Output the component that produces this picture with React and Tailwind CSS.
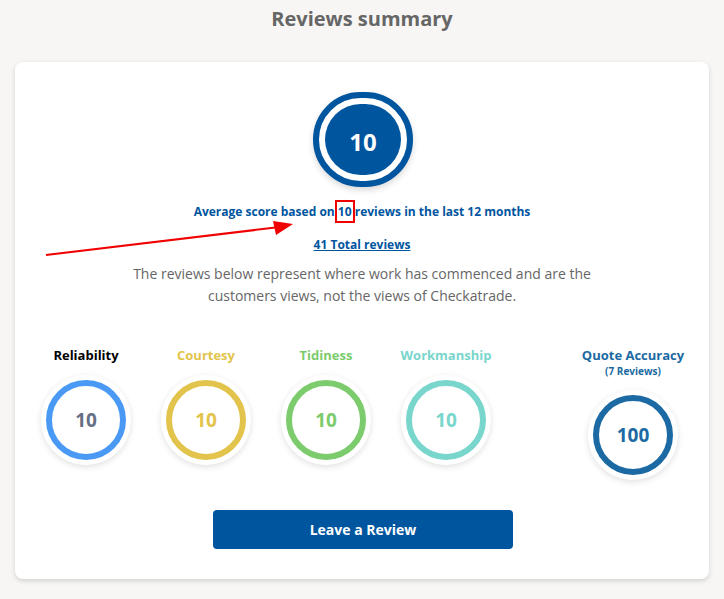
import React from 'react';

/**
 * Reviews summary card
 * - big average score badge
 * - category score rings
 * - leave a review button
 */
const categories = [
  { name: 'Reliability', score: 10, label: 'text-black', ring: 'border-[#4a9af5]', num: 'text-[#667085]' },
  { name: 'Courtesy', score: 10, label: 'text-[#e2c34b]', ring: 'border-[#e2c34b]', num: 'text-[#e2c34b]' },
  { name: 'Tidiness', score: 10, label: 'text-[#7ccb6c]', ring: 'border-[#7ccb6c]', num: 'text-[#7ccb6c]' },
  { name: 'Workmanship', score: 10, label: 'text-[#78d6cc]', ring: 'border-[#78d6cc]', num: 'text-[#78d6cc]' },
];

const ScoreRing = ({ ring, num, score }) => (
  <div className="w-[90px] h-[90px] rounded-full bg-white shadow-[0_2px_6px_rgba(0,0,0,0.12)] flex items-center justify-center">
    <div className={`w-[80px] h-[80px] rounded-full border-[6px] ${ring} flex items-center justify-center`}>
      <span className={`text-[19px] font-bold ${num}`}>{score}</span>
    </div>
  </div>
);

const App = () => {
  return (
    <div className="relative min-h-[599px] bg-[#f7f6f4] font-['Open_Sans',sans-serif] pb-5">
      <h1 className="h-[62px] pt-[4px] text-center text-[20px] font-bold text-[#666666]">Reviews summary</h1>

      <div className="mx-[15px] bg-white rounded-[8px] shadow-[0_2px_5px_rgba(0,0,0,0.15)] pt-[30px] pb-[30px]">
        {/* Average score badge */}
        <div className="flex justify-center">
          <div className="w-[100px] h-[95px] rounded-full border-[6px] border-[#00559f] bg-white p-[6px] shadow-[0_3px_6px_rgba(0,0,0,0.15)] ml-[2px]">
            <div className="w-full h-full rounded-full bg-[#00559f] flex items-center justify-center pt-[4px]">
              <span className="text-[24px] font-bold text-white">10</span>
            </div>
          </div>
        </div>

        <p className="mt-[17px] text-center text-[12px] leading-[16px] font-bold text-[#00559f]">
          Average score based on{' '}
          <span className="outline-2 outline-solid outline-[#f00000] outline-offset-[1px]">10</span>{' '}
          reviews in the last 12 months
        </p>

        <p className="mt-[17px] text-center text-[12px] leading-[16px] font-bold text-[#00559f]">
          <a href="#" className="underline">41 Total reviews</a>
        </p>

        <p className="mt-[10px] mx-auto max-w-[480px] text-center text-[14px] leading-[22px] text-[#666666]">
          The reviews below represent where work has commenced and are the customers views, not the views of Checkatrade.
        </p>

        {/* Category scores */}
        <div className="mt-[39px] pl-[11px] flex items-start">
          {categories.map((c) => (
            <div key={c.name} className="w-[120px] flex flex-col items-center">
              <div className={`text-[13px] leading-[18px] font-bold ${c.label}`}>{c.name}</div>
              <div className="mt-[11px]">
                <ScoreRing ring={c.ring} num={c.num} score={c.score} />
              </div>
            </div>
          ))}
          <div className="ml-[67px] w-[120px] flex flex-col items-center">
            <div className="text-[13px] leading-[18px] font-bold text-[#1b6aa3]">Quote Accuracy</div>
            <div className="text-[10px] leading-[14px] font-bold text-[#1b6aa3]">(7 Reviews)</div>
            <div className="mt-[12px]">
              <ScoreRing ring="border-[#1b6aa3]" num="text-[#1b6aa3]" score={100} />
            </div>
          </div>
        </div>

        <div className="mt-[30px] flex justify-center">
          <button className="w-[300px] h-[39px] rounded-[4px] bg-[#00559f] text-white text-[14px] font-bold ml-[2px]">
            Leave a Review
          </button>
        </div>
      </div>

      {/* Red annotation arrow */}
      <svg className="absolute left-0 top-0 pointer-events-none" width="724" height="599">
        <line x1="46" y1="255" x2="280" y2="227" stroke="#f00000" strokeWidth="2" />
        <polygon points="293,224 273,221 276,235" fill="#f00000" />
      </svg>
    </div>
  );
};

export default App;
